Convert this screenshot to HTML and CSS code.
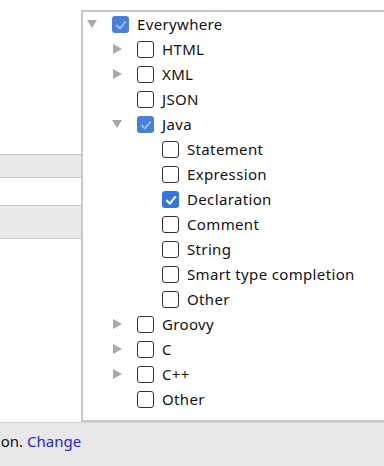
FILE: index.html
```html
<!DOCTYPE html>
<html>
    <head>
        <title>Scope</title>
        <link rel="stylesheet" href="styles.css">
    </head>
    <body>
        <div class="page">
            <div class="main">
                <div class="side">
                    <div class="side__stripe"></div>
                    <div class="side__stripe side__stripe--tall"></div>
                </div>
                <div class="popup">
                    <ul class="tree">
                        <li class="tree__row tree__row--l0"><span class="arrow arrow--down"></span><span class="check check--partial"></span>Everywhere</li>
                        <li class="tree__row tree__row--l1"><span class="arrow arrow--right"></span><span class="check"></span>HTML</li>
                        <li class="tree__row tree__row--l1"><span class="arrow arrow--right"></span><span class="check"></span>XML</li>
                        <li class="tree__row tree__row--l1"><span class="arrow"></span><span class="check"></span>JSON</li>
                        <li class="tree__row tree__row--l1"><span class="arrow arrow--down"></span><span class="check check--partial"></span>Java</li>
                        <li class="tree__row tree__row--l2"><span class="arrow"></span><span class="check"></span>Statement</li>
                        <li class="tree__row tree__row--l2"><span class="arrow"></span><span class="check"></span>Expression</li>
                        <li class="tree__row tree__row--l2"><span class="arrow"></span><span class="check check--on"></span>Declaration</li>
                        <li class="tree__row tree__row--l2"><span class="arrow"></span><span class="check"></span>Comment</li>
                        <li class="tree__row tree__row--l2"><span class="arrow"></span><span class="check"></span>String</li>
                        <li class="tree__row tree__row--l2"><span class="arrow"></span><span class="check"></span>Smart type completion</li>
                        <li class="tree__row tree__row--l2"><span class="arrow"></span><span class="check"></span>Other</li>
                        <li class="tree__row tree__row--l1"><span class="arrow arrow--right"></span><span class="check"></span>Groovy</li>
                        <li class="tree__row tree__row--l1"><span class="arrow arrow--right"></span><span class="check"></span>C</li>
                        <li class="tree__row tree__row--l1"><span class="arrow arrow--right"></span><span class="check"></span>C++</li>
                        <li class="tree__row tree__row--l1"><span class="arrow"></span><span class="check"></span>Other</li>
                    </ul>
                </div>
            </div>
            <div class="footer">
                <div class="footer__clip"><span>Applies to the current selection.</span></div>
                <a href="#" class="footer__link">Change</a>
            </div>
        </div>
    </body>
</html>
```

FILE: styles.css
```css
* {
  box-sizing: border-box;
  margin: 0;
  padding: 0;
}

body {
  font-family: "Noto Sans", "Open Sans", sans-serif;
  font-size: 15px;
  color: #111;
  background-color: #fff;
  width: 384px;
  height: 466px;
  overflow: hidden;
}

.page {
  display: grid;
  grid-template-rows: 422px 44px;
  height: 466px;
}

.main {
  display: flex;
}

.side {
  width: 81px;
  padding-top: 154px;
  display: flex;
  flex-direction: column;
  gap: 27px;
}

.side__stripe {
  height: 24px;
  background-color: #e9e9e9;
  border-top: 1px solid #c6c6c6;
  border-bottom: 1px solid #c6c6c6;
}

.side__stripe--tall {
  height: 34px;
}

.popup {
  flex: 1;
  margin-top: 10px;
  background-color: #fff;
  border-top: 2px solid #c9c9c9;
  border-left: 2px solid #c9c9c9;
  border-bottom: 2px solid #c9c9c9;
}

.tree {
  list-style: none;
  letter-spacing: 0.35px;
}

.tree__row {
  display: flex;
  align-items: center;
  height: 25px;
  line-height: 23px;
  padding-bottom: 1px;
  white-space: nowrap;
}

.tree__row--l0 {
  padding-left: 4px;
}

.tree__row--l1 {
  padding-left: 29px;
}

.tree__row--l2 {
  padding-left: 54px;
}

.arrow {
  width: 10px;
  height: 10px;
  margin-right: 15px;
  position: relative;
}

.arrow--down::after,
.arrow--right::after {
  content: "";
  position: absolute;
  width: 0;
  height: 0;
}

.arrow--down::after {
  left: 0;
  top: 1px;
  border-left: 5px solid transparent;
  border-right: 5px solid transparent;
  border-top: 8px solid #a9a9a9;
}

.arrow--right::after {
  left: 1px;
  top: 0;
  border-top: 5px solid transparent;
  border-bottom: 5px solid transparent;
  border-left: 9px solid #a9a9a9;
}

.check {
  width: 17px;
  height: 17px;
  margin-right: 8px;
  border: 1px solid #333;
  border-radius: 3px;
  background-color: #fff;
  position: relative;
}

.check--partial,
.check--on {
  border: none;
  background-color: #4a7fd6;
}

.check--on {
  background-color: #3277db;
}

.check--partial::after,
.check--on::after {
  content: "";
  position: absolute;
  left: 6px;
  top: 3px;
  width: 4px;
  height: 8px;
  border-right: 2px solid #fff;
  border-bottom: 2px solid #fff;
  transform: rotate(40deg);
}

.check--partial::after {
  border-color: #9ab8ea;
}

.footer {
  display: flex;
  align-items: center;
  padding-bottom: 7px;
  background-color: #e8e8e8;
  border-top: 1px solid #d4d4d4;
}

.footer__clip {
  width: 23px;
  overflow: hidden;
  display: flex;
  justify-content: flex-end;
  white-space: nowrap;
  margin-right: 4px;
}

.footer__link {
  color: #2626cf;
  text-decoration: none;
}
```
